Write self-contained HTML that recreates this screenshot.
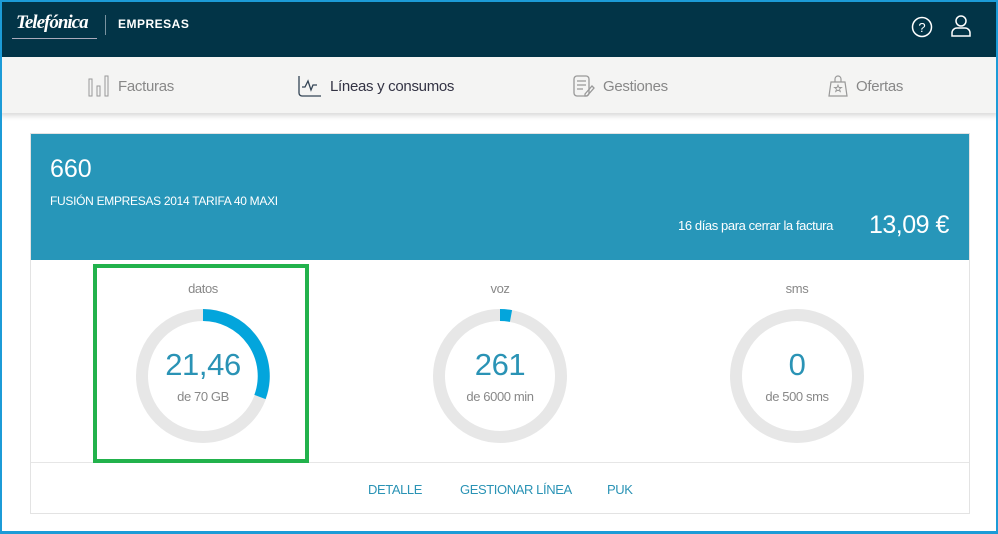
<!DOCTYPE html>
<html><head><meta charset="utf-8"><style>
*{margin:0;padding:0;box-sizing:border-box}
body{width:998px;height:534px;overflow:hidden;font-family:"Liberation Sans",sans-serif;background:#fff;position:relative}
.frame{position:absolute;inset:0;border:2px solid #1c9bd7;border-bottom-width:3px;z-index:10;pointer-events:none}
.top{position:absolute;left:0;top:0;width:998px;height:57px;background:#023447}
.nav{position:absolute;left:0;top:57px;width:998px;height:56px;background:#f4f4f3;box-shadow:0 3px 5px rgba(0,0,0,.15)}
.ni{position:absolute;top:18px;font-size:15px;color:#888;display:flex;align-items:center;gap:8px;letter-spacing:-.3px}
.card{position:absolute;left:30px;top:133px;width:940px;height:381px;border:1px solid #e3e3e3}
.hd{position:absolute;left:0;top:0;width:938px;height:126px;background:#2796b9;color:#fff}
.g{position:absolute;text-align:center;width:200px;letter-spacing:-.4px}
.lbl{font-size:13px;color:#888}
.links{position:absolute;top:348px;font-size:13px;color:#2a93b5;letter-spacing:-.4px}
</style></head><body>
<div class="frame"></div>
<div class="top">
 <div style="position:absolute;left:16px;top:12px;font:italic bold 19px 'Liberation Serif',serif;color:#fff;letter-spacing:-1px">Telefónica</div>
 <div style="position:absolute;left:12px;top:38px;width:85px;height:1px;background:#aab"></div>
 <div style="position:absolute;left:105px;top:15px;width:1px;height:20px;background:#7a93a0"></div>
 <div style="position:absolute;left:118px;top:17px;font-size:12px;font-weight:bold;color:#fff;letter-spacing:.5px">EMPRESAS</div>
 <svg style="position:absolute;left:911px;top:16px" width="22" height="22"><circle cx="11" cy="11" r="9.5" fill="none" stroke="#fff" stroke-width="1.5"/><text x="11" y="16" font-size="13" fill="#fff" text-anchor="middle" font-family="Liberation Sans">?</text></svg>
 <svg style="position:absolute;left:950px;top:14px" width="22" height="24"><circle cx="11" cy="7" r="5" fill="none" stroke="#fff" stroke-width="1.5"/><path d="M2 22v-3a5 5 0 0 1 5-5h8a5 5 0 0 1 5 5v3z" fill="none" stroke="#fff" stroke-width="1.5"/></svg>
</div>
<div class="nav">
 <div class="ni" style="left:88px"><svg width="22" height="22"><rect x="1" y="4" width="3" height="17" fill="none" stroke="#999"/><rect x="9" y="11" width="3" height="10" fill="none" stroke="#999"/><rect x="17" y="1" width="3" height="20" fill="none" stroke="#999"/></svg>Facturas</div>
 <div class="ni" style="left:298px;color:#334"><svg width="24" height="22"><path d="M1 1v17a3 3 0 0 0 3 3h19" fill="none" stroke="#345" stroke-width="1.3"/><path d="M4 12h3l3-6 3 9 2-5h4" fill="none" stroke="#345" stroke-width="1.3"/></svg>Líneas y consumos</div>
 <div class="ni" style="left:573px"><svg width="22" height="22"><rect x="1" y="1" width="15" height="20" rx="3" fill="none" stroke="#999" stroke-width="1.3"/><path d="M4 6h9M4 10h9M4 14h6M12 19l7-8 2 2-7 8h-2z" fill="none" stroke="#999" stroke-width="1.3"/></svg>Gestiones</div>
 <div class="ni" style="left:828px"><svg width="20" height="22"><path d="M3 7h14l2 14H1z M7 7V4a3 3 0 0 1 6 0v3" fill="none" stroke="#999" stroke-width="1.2"/><path d="M10 10l1 2.5h2.5l-2 1.5.8 2.5-2.3-1.5-2.3 1.5.8-2.5-2-1.5H9z" fill="none" stroke="#999" stroke-width=".9"/></svg>Ofertas</div>
</div>
<div class="card">
 <div class="hd">
  <div style="position:absolute;left:19px;top:21px;font-size:25px">660</div>
  <div style="position:absolute;left:19px;top:60px;font-size:12px;letter-spacing:-.3px">FUSIÓN EMPRESAS 2014 TARIFA 40 MAXI</div>
  <div style="position:absolute;left:647px;top:84px;font-size:13px;letter-spacing:-.4px">16 días para cerrar la factura</div>
  <div style="position:absolute;left:838px;top:77px;font-size:25px;letter-spacing:-.5px">13,09 €</div>
 </div>
 <div style="position:absolute;left:0;top:328px;width:938px;height:1px;background:#e6e6e6"></div>
 <svg style="position:absolute;left:0;top:0" width="938" height="330">
  <g fill="none" stroke-width="12">
   <circle cx="172" cy="242" r="61" stroke="#e7e7e7"/>
   <circle cx="469" cy="242" r="61" stroke="#e7e7e7"/>
   <circle cx="766" cy="242" r="61" stroke="#e7e7e7"/>
   <path d="M172 181 A61 61 0 0 1 229 263" stroke="#03a5dc"/>
   <path d="M469 181 A61 61 0 0 1 480 182" stroke="#03a5dc"/>
  </g>
 </svg>
 <div class="g" style="left:72px;top:147px"><div class="lbl">datos</div></div>
 <div class="g" style="left:72px;top:213px;font-size:31px;color:#2a93b5">21,46</div>
 <div class="g" style="left:72px;top:255px;font-size:13px;color:#888">de 70 GB</div>
 <div class="g" style="left:369px;top:147px"><div class="lbl">voz</div></div>
 <div class="g" style="left:369px;top:213px;font-size:31px;color:#2a93b5">261</div>
 <div class="g" style="left:369px;top:255px;font-size:13px;color:#888">de 6000 min</div>
 <div class="g" style="left:666px;top:147px"><div class="lbl">sms</div></div>
 <div class="g" style="left:666px;top:213px;font-size:31px;color:#2a93b5">0</div>
 <div class="g" style="left:666px;top:255px;font-size:13px;color:#888">de 500 sms</div>
 <div class="links" style="left:337px">DETALLE</div>
 <div class="links" style="left:429px">GESTIONAR LÍNEA</div>
 <div class="links" style="left:576px">PUK</div>
</div>
<div style="position:absolute;left:93px;top:264px;width:216px;height:199px;border:4px solid #22b24c"></div>
</body></html>
